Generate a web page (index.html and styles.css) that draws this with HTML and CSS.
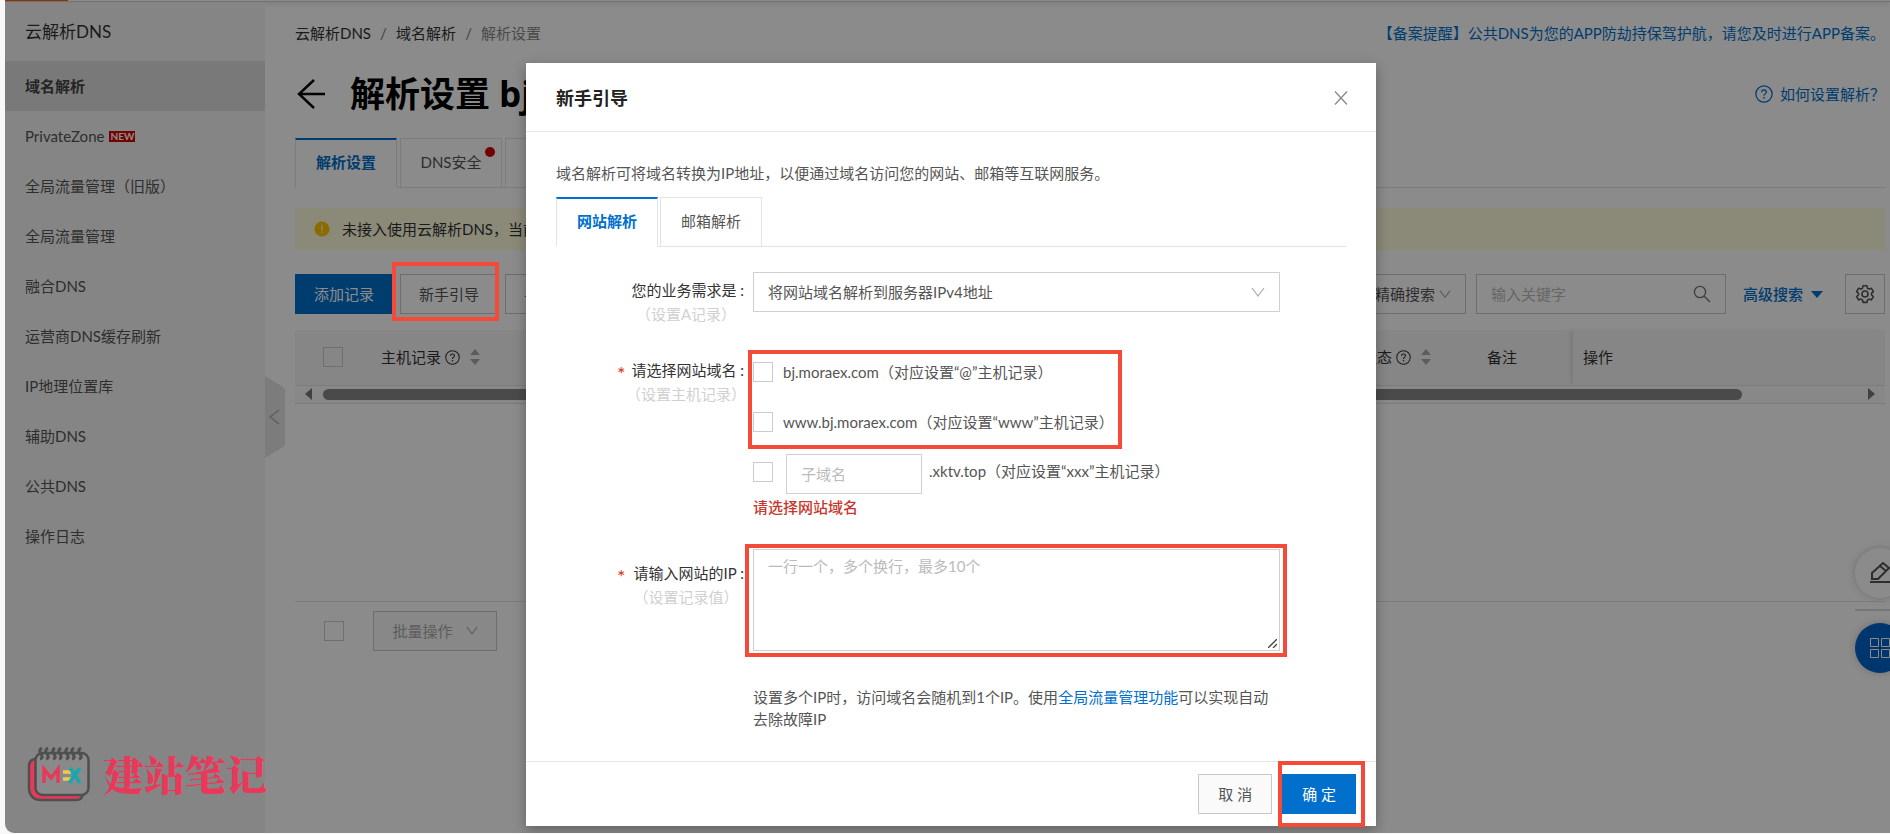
FILE: index.html
```html
<!DOCTYPE html>
<html lang="zh-CN">
<head>
<meta charset="utf-8">
<title>云解析DNS</title>
<link rel="stylesheet" href="styles.css">
</head>
<body>
<svg class="defs" aria-hidden="true">
  <symbol id="chevron" viewBox="0 0 14 10"><path d="M1 1l6 8 6-8" fill="none" stroke="currentColor" stroke-width="1.2"/></symbol>
  <symbol id="help" viewBox="0 0 16 16"><circle cx="8" cy="8" r="7.2" fill="none" stroke="currentColor" stroke-width="1.1"/><path d="M5.900 6.400c0-1.300.9-2.100 2.100-2.100s2.100.8 2.100 1.900c0 1.400-2.100 1.600-2.100 3.300" fill="none" stroke="currentColor" stroke-width="1.1"/><circle cx="8" cy="11.400" r=".8" fill="currentColor"/></symbol>
  <symbol id="sort" viewBox="0 0 10 16"><path d="M0 6l5-6 5 6zM0 10h10l-5 6z" fill="currentColor"/></symbol>
</svg>
<div class="app">
  <div class="topbar"><span class="topbar-brand"></span></div>
  <div class="body">
    <aside class="sidebar">
      <h2 class="sidebar-title">云解析DNS</h2>
      <nav class="menu">
        <a class="menu-item active" href="#">域名解析</a>
        <a class="menu-item" href="#">PrivateZone<span class="new-tag">NEW</span></a>
        <a class="menu-item" href="#">全局流量管理（旧版）</a>
        <a class="menu-item" href="#">全局流量管理</a>
        <a class="menu-item" href="#">融合DNS</a>
        <a class="menu-item" href="#">运营商DNS缓存刷新</a>
        <a class="menu-item" href="#">IP地理位置库</a>
        <a class="menu-item" href="#">辅助DNS</a>
        <a class="menu-item" href="#">公共DNS</a>
        <a class="menu-item" href="#">操作日志</a>
      </nav>
      <button class="collapse" aria-label="收起">
        <svg width="20" height="82" viewBox="0 0 20 82"><path d="M0 0l18 11q2 1 2 4v52q0 3-2 4L0 82z" fill="#e4e4e4"/><path d="M14 34l-9 7 9 7" fill="none" stroke="#aaa" stroke-width="1.3"/></svg>
      </button>
    </aside>

    <main class="main">
      <div class="crumb-row">
        <nav class="crumbs"><a href="#">云解析DNS</a><span class="sep">/</span><a href="#">域名解析</a><span class="sep">/</span><span class="here">解析设置</span></nav>
        <a class="link" href="#">【备案提醒】公共DNS为您的APP防劫持保驾护航，请您及时进行APP备案。</a>
      </div>
      <div class="title-row">
        <button class="back" aria-label="返回"><svg width="30" height="30" viewBox="0 0 30 30"><path d="M19 1L4 15l15 14M4 15h26" fill="none" stroke="#000" stroke-width="2.4"/></svg></button>
        <h1 class="title">解析设置 bj</h1>
        <a class="link title-help" href="#"><svg width="18" height="18"><use href="#help"/></svg>如何设置解析？</a>
      </div>
      <div class="tabs">
        <button class="tab on">解析设置</button>
        <button class="tab">DNS安全<span class="dot"></span></button>
        <button class="tab">权重配置</button>
      </div>
      <div class="alert">
        <svg width="16" height="16" viewBox="0 0 16 16"><circle cx="8" cy="8" r="7.5" fill="#ffc400"/><path d="M8 3.8v5.4M8 10.6v1.6" stroke="#fff" stroke-width="1.2"/></svg>
        <span>未接入使用云解析DNS，当前</span>
      </div>
      <div class="toolbar">
        <button class="btn primary">添加记录</button>
        <button class="btn marked">新手引导<span class="mark mark-guide"></span></button>
        <button class="btn">导入</button>
        <div class="tools">
          <span class="select-wrap"><select class="select mode" aria-label="搜索方式"><option>精确搜索</option></select><svg class="mode-arrow" width="12" height="10"><use href="#chevron"/></svg></span>
          <span class="search"><input type="text" placeholder="输入关键字" aria-label="输入关键字"><svg width="18" height="18" viewBox="0 0 18 18"><circle cx="7" cy="7" r="5.6" fill="none" stroke="#777" stroke-width="1.4"/><path d="M11 11l6 6" stroke="#777" stroke-width="1.4"/></svg></span>
          <a class="link advanced" href="#">高级搜索<svg width="12" height="7" viewBox="0 0 12 7"><path d="M0 0h12L6 7z" fill="currentColor"/></svg></a>
          <button class="btn gear" aria-label="设置"><svg width="20" height="20" viewBox="0 0 20 20" fill="none" stroke="#555" stroke-width="1.6" stroke-linejoin="round"><path d="M8 1.8h4l.5 2.4 1.6.9 2.3-.8 2 3.4-1.9 1.6v1.6l1.9 1.6-2 3.4-2.3-.8-1.6.9-.5 2.4H8l-.5-2.4-1.6-.9-2.3.8-2-3.4 1.9-1.6V9.300l-1.900-1.600 2-3.400 2.300.8 1.600-.9z"/><circle cx="10" cy="10" r="3"/></svg></button>
        </div>
      </div>
      <table class="table">
        <thead><tr>
          <th class="c-check"><input type="checkbox" aria-label="全选"></th>
          <th><span class="th">主机记录<svg width="15" height="15"><use href="#help"/></svg><svg class="sort" width="10" height="16"><use href="#sort"/></svg></span></th>
          <th class="c-state"><span class="th">状态<svg width="15" height="15"><use href="#help"/></svg><svg class="sort" width="10" height="16"><use href="#sort"/></svg></span></th>
          <th class="c-note">备注</th>
          <th class="c-op">操作</th>
        </tr></thead>
      </table>
      <div class="scroll">
        <svg width="7" height="12" viewBox="0 0 7 12"><path d="M7 0v12L0 6z" fill="#777"/></svg>
        <span class="track"><span class="thumb"></span></span>
        <svg width="7" height="12" viewBox="0 0 7 12"><path d="M0 0v12l7-6z" fill="#777"/></svg>
      </div>
      <div class="empty"></div>
      <div class="batch">
        <input type="checkbox" aria-label="选择全部">
        <button class="btn batch-btn" disabled>批量操作<svg width="12" height="9"><use href="#chevron"/></svg></button>
      </div>
    </main>
  </div>

  <div class="float">
    <button class="float-btn" aria-label="反馈"><svg width="26" height="26" viewBox="0 0 26 26" fill="none" stroke="#555" stroke-width="2"><path d="M4 19v-6L15 3l6 5-11 11zM12 6l6 5M2 22h24"/></svg></button>
    <span class="float-line"></span>
    <button class="float-btn blue" aria-label="应用"><svg width="22" height="22" viewBox="0 0 22 22" fill="none" stroke="#fff" stroke-width="1"><path d="M1.500 1.500h8v8h-8zM12.500 1.500h8v8h-8zM1.500 12.500h8v8h-8zM12.500 12.500h8v8h-8z"/></svg></button>
  </div>

  <div class="mask">
    <section class="modal" role="dialog" aria-labelledby="dlg-title">
      <header class="modal-head">
        <h3 id="dlg-title">新手引导</h3>
        <button class="close" aria-label="关闭"><svg width="14" height="14" viewBox="0 0 14 14"><path d="M1 .5l12 13M13 .5L1 13.500" stroke="#888" stroke-width="1.300"/></svg></button>
      </header>
      <div class="modal-body">
        <p class="intro">域名解析可将域名转换为IP地址，以便通过域名访问您的网站、邮箱等互联网服务。</p>
        <div class="tabs modal-tabs">
          <button class="tab on">网站解析</button>
          <button class="tab">邮箱解析</button>
        </div>
        <form class="form">
          <div class="row">
            <div class="label"><label for="need">您的业务需求是 :</label><small>（设置A记录）</small></div>
            <div class="field">
              <span class="select-wrap full"><select class="select" id="need"><option>将网站域名解析到服务器IPv4地址</option></select><svg class="need-arrow" width="14" height="10"><use href="#chevron"/></svg></span>
            </div>
          </div>
          <div class="row row-hosts">
            <div class="label req"><span>请选择网站域名 :</span><small>（设置主机记录）</small></div>
            <div class="field">
              <div class="marked hosts">
                <label class="check"><input type="checkbox">bj.moraex.com（对应设置“@”主机记录）</label>
                <label class="check"><input type="checkbox">www.bj.moraex.com（对应设置“www”主机记录）</label>
                <span class="mark mark-hosts"></span>
              </div>
              <div class="check sub"><input type="checkbox" aria-label="子域名"><input class="sub-input" type="text" placeholder="子域名" aria-label="子域名"><span>.xktv.top（对应设置“xxx”主机记录）</span></div>
              <p class="error">请选择网站域名</p>
            </div>
          </div>
          <div class="row row-ip">
            <div class="label req label-ip"><label for="ip">请输入网站的IP :</label><small>（设置记录值）</small></div>
            <div class="field">
              <div class="marked ip-box">
                <textarea id="ip" placeholder="一行一个，多个换行，最多10个"></textarea>
                <svg class="grip" width="9" height="9" viewBox="0 0 9 9"><path d="M0 9l9-9M5 9l4-4" stroke="#444" stroke-width="1.300"/></svg>
                <span class="mark mark-ip"></span>
              </div>
              <p class="hint">设置多个IP时，访问域名会随机到1个IP。使用<a class="link" href="#">全局流量管理功能</a>可以实现自动去除故障IP</p>
            </div>
          </div>
        </form>
      </div>
      <footer class="modal-foot">
        <button class="btn">取 消</button>
        <button class="btn primary marked">确 定<span class="mark mark-ok"></span></button>
      </footer>
    </section>
  </div>

  <div class="brand">
    <svg width="64" height="56" viewBox="0 0 64 56" fill="none" stroke="#4f4f4f" stroke-width="2.500">
      <path d="M8 13Q2 14 2 20v23q1 11 12 11h35q6 0 7-6" fill="#e8395b"/>
      <rect x="8.500" y="7" width="53" height="42" rx="7" fill="#8a8a8a"/>
      <path d="M15 2q-4 2-1 6t-1 5M21 2q-4 2-1 6t-1 5M28 2q-4 2-1 6t-1 5M34 2q-4 2-1 6t-1 5M41 2q-4 2-1 6t-1 5M47 2q-4 2-1 6t-1 5M54 2q-4 2-1 6t-1 5" stroke-width="3"/>
      <path d="M17 37V23l7 9 7-9v14" stroke="#e8395b" stroke-width="3.500"/>
      <path d="M36 26h8M36 33h8" stroke="#f2c94c" stroke-width="3.500"/>
      <path d="M43 22l10 15M53 22L42 37" stroke="#14a9b0" stroke-width="3.500"/>
    </svg>
    <strong>建站笔记</strong>
  </div>
</div>
</body>
</html>
```
FILE: styles.css
```css
* { box-sizing: border-box; }
body {
  margin: 0;
  padding: 0 0 1px 5px;
  background: #f8f8f8;
  color: #333;
  font: 15px/22px Lato, "Noto Sans CJK SC", sans-serif;
  overflow: hidden;
}
button, input, select, textarea { font: inherit; color: inherit; border-radius: 0; }
button { cursor: pointer; }
a { color: inherit; text-decoration: none; }
h1, h2, h3, p { margin: 0; }
svg { flex: none; }
.defs { position: absolute; width: 0; height: 0; }

.app {
  position: relative;
  display: flex;
  flex-direction: column;
  min-height: calc(100vh - 1px);
  background: #fff;
  border-radius: 0 0 0 9px;
  overflow: hidden;
}
.topbar { height: 2px; border-bottom: 1px solid #d0d0d0; box-shadow: 0 1px 5px #ccc; }
.topbar-brand { display: block; width: 63px; height: 1px; background: #ff6a00; }
.body { display: flex; flex: 1; }

.sidebar { position: relative; width: 260px; flex: none; background: #f5f5f5; color: #555; }
.sidebar-title { padding: 0 20px; font-size: 17px; font-weight: 400; line-height: 59px; color: #333; }
.menu { display: flex; flex-direction: column; }
.menu-item { display: flex; align-items: center; height: 50px; padding: 0 20px; }
.menu-item.active { background: #dedede; font-weight: 700; color: #444; }
.new-tag { margin-left: 5px; padding: 0 1px; background: #d50000; color: #fff; font: 700 10px/11px Lato, sans-serif; }
.collapse { position: absolute; left: 100%; top: 374px; padding: 0; border: 0; background: none; }
.collapse svg { display: block; }

.main { flex: 1; min-width: 0; padding: 10px 5px 0 30px; }
.crumb-row { display: flex; align-items: center; justify-content: space-between; height: 42px; }
.crumbs { display: flex; }
.sep { width: 25px; text-align: center; color: #777; }
.here { color: #888; }
.link { color: #0070cc; }
.title-row { display: flex; align-items: center; height: 60px; margin: 10px 0 14px; }
.back { padding: 0; border: 0; background: none; width: 55px; text-align: left; line-height: 0; }
.title { font: 700 35px/50px "Open Sans", "Noto Sans CJK SC", sans-serif; color: #000; }
.title-help { display: flex; align-items: center; gap: 7px; margin-left: auto; }

.tabs { display: flex; gap: 3px; height: 50px; border-bottom: 1px solid #e3e4e6; }
.tab { position: relative; width: 102px; height: 50px; padding: 0 0 3px; border: 1px solid #e3e4e6; background: #fff; color: #555; white-space: nowrap; }
.tab.on { padding-bottom: 4px; border-top: 2px solid #0070cc; border-bottom-color: #fff; color: #0070cc; font-weight: 700; }
.dot { position: absolute; right: 6px; top: 8px; width: 10px; height: 10px; border-radius: 50%; background: #d50000; }

.alert { display: flex; align-items: center; gap: 12px; height: 42px; margin: 20px 0 24px; padding: 0 19px; background: #fffddf; white-space: nowrap; }
.toolbar { display: flex; gap: 7px; margin-bottom: 16px; }
.btn { display: inline-flex; align-items: center; justify-content: center; height: 40px; padding: 0 19px; border: 1px solid #c8c8c8; background: #fafafa; color: #555; white-space: nowrap; }
.btn.primary { border-color: #0070cc; background: #0070cc; color: #fff; }
.toolbar .btn { padding: 0 18px; background: #fff; }
.toolbar .btn.primary { background: #0070cc; }
.tools { display: flex; align-items: center; margin-left: auto; }
.select-wrap { position: relative; display: inline-flex; }
.select-wrap svg { position: absolute; top: 15px; color: #aaa; pointer-events: none; }
.select { appearance: none; height: 40px; padding: 0 14px; border: 1px solid #d0d0d0; background: #fff; color: #555; }
.mode { width: 106px; border-color: #c8c8c8; }
.select-wrap .mode-arrow { right: 15px; }
.select-wrap .need-arrow { right: 15px; }
.full, .full .select { width: 100%; }
.search { display: flex; align-items: center; width: 250px; height: 40px; margin: 0 17px 0 10px; padding: 0 14px; border: 1px solid #c8c8c8; }
.search input { flex: 1; min-width: 0; padding: 0; border: 0; outline: 0; background: none; }
::placeholder { color: #bbb; opacity: 1; }
.advanced { display: flex; align-items: center; gap: 8px; margin-right: 22px; font-weight: 500; }
.toolbar .gear { width: 40px; padding: 0; }

input[type="checkbox"] { appearance: none; flex: none; display: block; width: 20px; height: 20px; margin: 0; border: 1px solid #ccc; background: #fff; }
.table { width: 100%; border-collapse: collapse; table-layout: fixed; background: #f6f6f6; border-bottom: 1px solid #e3e4e6; }
.table th { height: 55px; padding: 0 20px; text-align: left; font-weight: 400; }
.table .c-check { width: 66px; padding: 0 0 0 28px; }
.table .c-check input { background: #f6f6f6; }
.table .c-state { width: 125px; }
.table .c-note { width: 106px; }
.table .c-op { width: 312px; padding: 0 10px; box-shadow: -3px 0 4px -1px #ddd; }
.th { display: flex; align-items: center; gap: 4px; }
.sort { margin-left: 6px; color: #aaa; }
.scroll { display: flex; align-items: center; gap: 11px; height: 18px; padding: 0 10px; border-bottom: 1px solid #e0e4e4; background: #fafafa; }
.track { flex: 1; }
.thumb { display: block; width: 92.5%; height: 11px; border-radius: 6px; background: #888; }
.empty { height: 197px; }
.batch { display: flex; align-items: center; gap: 29px; padding: 9px 29px; border-top: 1px solid #e0e4e4; }
.batch-btn { gap: 13px; width: 124px; color: #aaa; }

.float { position: absolute; right: -15px; top: 548px; display: flex; flex-direction: column; align-items: center; }
.float-btn { width: 50px; height: 50px; padding: 0 7px 0 13px; border: 0; border-radius: 50%; background: #fff; box-shadow: 0 0 8px #ccc; line-height: 0; text-align: left; }
.float-btn.blue { background: #0064c8; padding-left: 14px; }
.float-line { width: 50px; height: 2px; margin: 11px 0 12px; background: #d8d8d8; }

.mask { position: absolute; inset: 0; padding: 63px 0 0 7px; display: flex; justify-content: center; align-items: flex-start; background: rgba(0, 0, 0, .455); }
.modal { width: 850px; background: #fff; box-shadow: 0 4px 12px rgba(0, 0, 0, .3); }
.modal-head { display: flex; align-items: center; justify-content: space-between; height: 69px; padding: 2px 28px 0 30px; border-bottom: 1px solid #e5e8e8; }
.modal-head h3 { font-size: 18px; line-height: 26px; color: #222; }
.close { padding: 0; border: 0; background: none; line-height: 0; }
.modal-body { padding: 30px 30px 31px; color: #555; }
.intro { margin-bottom: 13px; }
.modal-tabs { gap: 2px; margin-bottom: 25px; }
.form { display: flex; flex-direction: column; }
.row { display: flex; gap: 9px; }
.row-hosts { margin-top: 36px; }
.row-ip { margin-top: 31px; }
.label { position: relative; display: flex; flex-direction: column; align-items: center; width: 188px; padding: 6px 0 0 72px; line-height: 24px; color: #333; white-space: nowrap; }
.label > :first-child { align-self: flex-end; height: 24px; }
.label small { font-size: 15px; color: #d0d0d0; }
.row-hosts .label { margin-top: -4px; padding-top: 0; }
.label-ip { padding-top: 12px; }
.req > :first-child::before { content: "*"; position: absolute; left: 61px; color: #d93026; font-size: 20px; line-height: 30px; }
.field { width: 527px; }
.check { display: flex; align-items: center; gap: 10px; height: 20px; white-space: nowrap; }
.hosts { display: flex; flex-direction: column; gap: 30px; }
.check.sub { height: 40px; margin-top: 22px; gap: 13px; align-items: flex-start; }
.sub input[type="checkbox"] { margin-top: 8px; }
.sub-input { width: 136px; height: 40px; padding: 0 14px; border: 1px solid #d0d0d0; }
.sub > span { margin: 6px 0 0 -6px; }
.error { margin-top: 2px; color: #c8372d; font-weight: 500; }
.ip-box { display: flex; }
textarea { display: block; width: 100%; height: 102px; padding: 5px 14px; border: 1px solid #d0d0d0; resize: none; }
.grip { position: absolute; right: 3px; bottom: 3px; }
.hint { margin-top: 35px; }
.modal-foot { display: flex; justify-content: flex-end; gap: 10px; padding: 12px 20px; border-top: 1px solid #e5e8e8; }

.marked { position: relative; }
.mark { position: absolute; border: 4px solid #f54a38; pointer-events: none; }
.mark-guide { z-index: 2; inset: -13px -2px -8px -9px; }
.mark-hosts { inset: -12px 158px -17px -5px; }
.mark-ip { inset: -5px -7px -6px -8px; }
.mark-ok { inset: -14px -10px -14px -5px; }

.brand { position: absolute; left: 22px; bottom: 31px; z-index: 3; display: flex; align-items: center; gap: 12px; color: #e8395b; }
.brand strong { font: 900 41px/56px "Noto Serif CJK SC", "Noto Sans CJK SC", serif; white-space: nowrap; }
```
